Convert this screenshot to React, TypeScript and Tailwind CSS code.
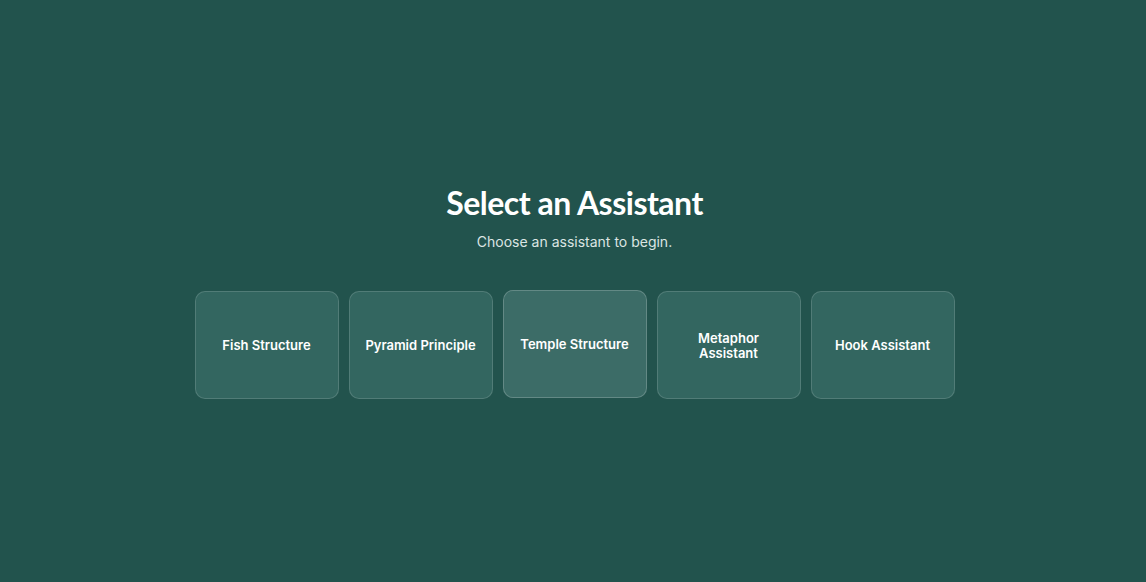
export default function App() {
  const assistants = [
    "Fish Structure",
    "Pyramid Principle",
    "Temple Structure",
    "Metaphor Assistant",
    "Hook Assistant",
  ];

  return (
    <div className="flex min-h-screen w-full flex-col items-center justify-center bg-[#22534d] pl-[3px] font-['Inter',sans-serif]">
      <h1 className="font-['Lato',sans-serif] text-[32px] font-bold leading-10 tracking-[-0.5px] text-white">
        Select an Assistant
      </h1>
      <p className="mt-[9px] text-sm text-[#dbe5e3]">Choose an assistant to begin.</p>

      <div className="mt-[39px] flex gap-2.5">
        {assistants.map((name, i) => (
          <button
            key={name}
            className={
              i === 2
                ? "flex h-[108px] w-36 -translate-y-px items-center justify-center rounded-[10px] border border-white/20 bg-[#3c6c67] px-2 text-center text-[13px] font-semibold leading-[15px] text-white"
                : "flex h-[108px] w-36 items-center justify-center rounded-[10px] border border-white/15 bg-[#336660] px-2 text-center text-[13px] font-semibold leading-[15px] text-white"
            }
          >
            {name === "Metaphor Assistant" ? (
              <span className="pt-px">
                Metaphor
                <br />
                Assistant
              </span>
            ) : (
              name
            )}
          </button>
        ))}
      </div>
    </div>
  );
}
